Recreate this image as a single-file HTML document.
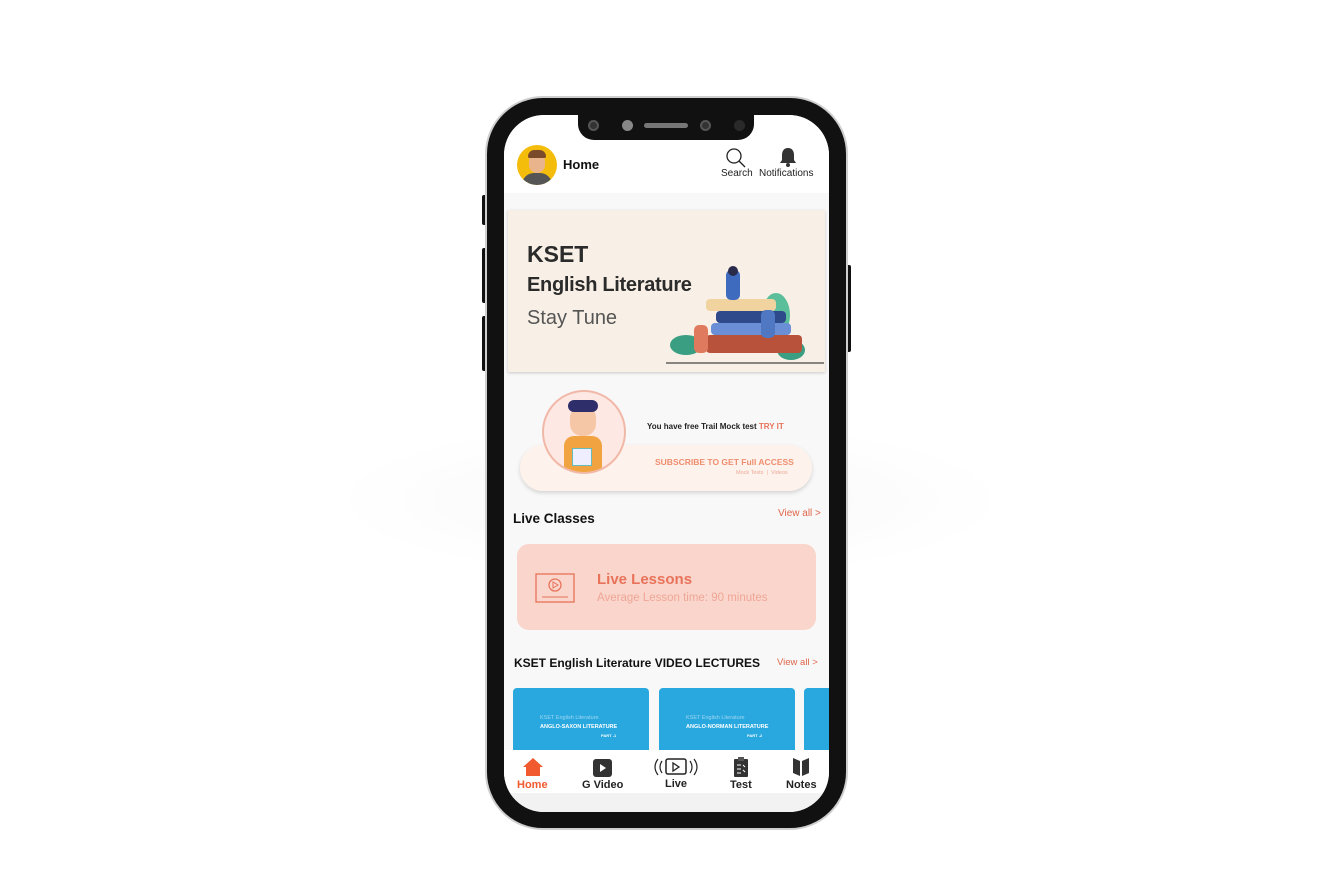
<!DOCTYPE html>
<html><head><style>
*{margin:0;padding:0;box-sizing:border-box}
body{width:1339px;height:893px;background:#fff;position:relative;overflow:hidden;font-family:"Liberation Sans",sans-serif}
.a{position:absolute}
.btn{background:#111;border-radius:2px}
</style></head><body>
<div class="a" style="left:330px;top:420px;width:680px;height:160px;border-radius:50%;background:radial-gradient(ellipse,#f7f7f7 0%,#fff 70%)"></div>
<div class="a btn" style="left:482px;top:195px;width:6px;height:30px"></div>
<div class="a btn" style="left:482px;top:248px;width:6px;height:55px"></div>
<div class="a btn" style="left:482px;top:316px;width:6px;height:55px"></div>
<div class="a btn" style="left:845px;top:265px;width:6px;height:87px"></div>
<div class="a" style="left:485px;top:96px;width:363px;height:734px;border-radius:58px;background:#111;border:2px solid #cfcfcf"></div>
<div class="a" style="left:504px;top:115px;width:325px;height:697px;border-radius:40px;background:#f8f8f8;overflow:hidden">
  <div class="a" style="left:0;top:0;width:325px;height:78px;background:#fff"></div>
  <div class="a" style="left:74px;top:0;width:176px;height:25px;background:#111;border-radius:0 0 16px 16px"></div>
  <div class="a" style="left:84px;top:5px;width:11px;height:11px;border-radius:50%;background:#333;border:2px solid #555"></div>
  <div class="a" style="left:118px;top:5px;width:11px;height:11px;border-radius:50%;background:#888"></div>
  <div class="a" style="left:140px;top:8px;width:44px;height:5px;border-radius:3px;background:#777"></div>
  <div class="a" style="left:196px;top:5px;width:11px;height:11px;border-radius:50%;background:#333;border:2px solid #555"></div>
  <div class="a" style="left:230px;top:5px;width:11px;height:11px;border-radius:50%;background:#2a2a2a"></div>
  <div class="a" style="left:13px;top:30px;width:40px;height:40px;border-radius:50%;background:#f5bd0b;overflow:hidden">
    <div class="a" style="left:12px;top:8px;width:16px;height:20px;border-radius:8px;background:#e9b48c"></div>
    <div class="a" style="left:11px;top:5px;width:18px;height:8px;border-radius:8px 8px 2px 2px;background:#7a4a2a"></div>
    <div class="a" style="left:5px;top:28px;width:30px;height:16px;border-radius:12px 12px 0 0;background:#555"></div>
  </div>
  <div class="a" style="left:59px;top:42px;font-size:13px;font-weight:bold;color:#111">Home</div>
  <svg class="a" style="left:221px;top:32px" width="22" height="22" viewBox="0 0 22 22"><circle cx="9" cy="9" r="7" fill="none" stroke="#222" stroke-width="1.3"/><path d="M14 14l6 6" stroke="#222" stroke-width="1.3"/></svg>
  <div class="a" style="left:217px;top:53px;font-size:10px;color:#222">Search</div>
  <svg class="a" style="left:275px;top:32px" width="18" height="20" viewBox="0 0 18 20"><path d="M9 1c-4 0-6 3-6 7v5l-2 3h16l-2-3V8c0-4-2-7-6-7z" fill="#333"/><circle cx="9" cy="18" r="2" fill="#333"/></svg>
  <div class="a" style="left:255px;top:53px;font-size:10px;color:#222">Notifications</div>
  <div class="a" style="left:4px;top:95px;width:317px;height:162px;background:#f8f0e6;box-shadow:0 1px 3px rgba(0,0,0,.2)">
    <div class="a" style="left:19px;top:31px;font-size:23px;font-weight:bold;color:#2b2b2b">KSET</div>
    <div class="a" style="left:19px;top:64px;font-size:20px;font-weight:bold;color:#2b2b2b;letter-spacing:-0.3px">English Literature</div>
    <div class="a" style="left:19px;top:97px;font-size:20px;color:#555">Stay Tune</div>
    <svg class="a" style="left:158px;top:55px" width="158" height="105" viewBox="0 0 158 105">
      <ellipse cx="20" cy="80" rx="16" ry="10" fill="#3a9e83"/><ellipse cx="110" cy="50" rx="14" ry="22" fill="#5bbf9c"/><ellipse cx="125" cy="85" rx="14" ry="10" fill="#3a9e83"/>
      <rect x="40" y="70" width="96" height="18" rx="4" fill="#b8523a"/><rect x="45" y="58" width="80" height="12" rx="4" fill="#6b8fd6"/><rect x="50" y="46" width="70" height="12" rx="4" fill="#2f4a8a"/><rect x="40" y="34" width="70" height="12" rx="4" fill="#f1d3a0"/>
      <rect x="60" y="5" width="14" height="30" rx="5" fill="#3f6bbf"/><circle cx="67" cy="6" r="5" fill="#2a2a4a"/>
      <rect x="28" y="60" width="14" height="28" rx="5" fill="#e07a5f"/><rect x="95" y="45" width="14" height="28" rx="5" fill="#4f77c2"/>
      <path d="M0 98h158" stroke="#444" stroke-width="1.2"/>
    </svg>
  </div>
  <div class="a" style="left:16px;top:330px;width:292px;height:46px;border-radius:23px;background:#fef3ec;box-shadow:0 2px 4px rgba(0,0,0,.15)"></div>
  <div class="a" style="left:38px;top:275px;width:84px;height:84px;border-radius:50%;background:#fde8e3;border:2px solid #f1b8a8;overflow:hidden">
    <div class="a" style="left:26px;top:14px;width:26px;height:30px;border-radius:12px;background:#f6c7a6"></div>
    <div class="a" style="left:24px;top:8px;width:30px;height:12px;border-radius:10px;background:#2e2e6a"></div>
    <div class="a" style="left:20px;top:44px;width:38px;height:40px;border-radius:10px;background:#f0a340"></div>
    <div class="a" style="left:28px;top:56px;width:20px;height:18px;background:#eef;border:1px solid #6bb"></div>
  </div>
  <div class="a" style="left:143px;top:307px;font-size:8px;font-weight:bold;color:#222">You have free Trail Mock test <span style="color:#e8735a">TRY IT</span></div>
  <div class="a" style="left:151px;top:342px;font-size:8.5px;font-weight:bold;color:#ef8d6f">SUBSCRIBE TO GET Full ACCESS</div>
  <div class="a" style="left:232px;top:355px;font-size:5.5px;color:#e8a898">Mock Tests &nbsp;|&nbsp; Videos</div>
  <div class="a" style="left:9px;top:396px;font-size:13.5px;font-weight:bold;color:#111">Live Classes</div>
  <div class="a" style="left:274px;top:393px;font-size:10px;color:#e0664a">View all &gt;</div>
  <div class="a" style="left:13px;top:429px;width:299px;height:86px;border-radius:12px;background:#f9d5cc"></div>
  <svg class="a" style="left:30px;top:458px" width="42" height="32" viewBox="0 0 42 32"><rect x="2" y="1" width="38" height="28" fill="none" stroke="#e8735a" stroke-width="1.3"/><circle cx="21" cy="12" r="6" fill="none" stroke="#e8735a" stroke-width="1.3"/><path d="M19 9v6l5-3z" fill="none" stroke="#e8735a"/><path d="M8 24h26" stroke="#e8735a"/></svg>
  <div class="a" style="left:93px;top:456px;font-size:15px;font-weight:bold;color:#e8735a">Live Lessons</div>
  <div class="a" style="left:93px;top:477px;font-size:11.5px;color:#f0a696">Average Lesson time: 90 minutes</div>
  <div class="a" style="left:10px;top:541px;font-size:12px;font-weight:bold;color:#111">KSET English Literature VIDEO LECTURES</div>
  <div class="a" style="left:273px;top:542px;font-size:9.5px;color:#e0664a">View all &gt;</div>
  <div class="a" style="left:9px;top:573px;width:136px;height:70px;border-radius:4px;background:#29a8df">
    <div class="a" style="left:27px;top:27px;font-size:5.5px;color:#9fd6f0">KSET English Literature</div>
    <div class="a" style="left:27px;top:36px;font-size:5.5px;font-weight:bold;color:#fff">ANGLO-SAXON LITERATURE</div>
    <div class="a" style="left:88px;top:45px;font-size:4px;font-weight:bold;color:#fff">PART -1</div>
  </div>
  <div class="a" style="left:155px;top:573px;width:136px;height:70px;border-radius:4px;background:#29a8df">
    <div class="a" style="left:27px;top:27px;font-size:5.5px;color:#9fd6f0">KSET English Literature</div>
    <div class="a" style="left:27px;top:36px;font-size:5.5px;font-weight:bold;color:#fff">ANGLO-NORMAN LITERATURE</div>
    <div class="a" style="left:88px;top:45px;font-size:4px;font-weight:bold;color:#fff">PART -2</div>
  </div>
  <div class="a" style="left:300px;top:573px;width:30px;height:70px;border-radius:4px;background:#29a8df"></div>
  <div class="a" style="left:0;top:635px;width:325px;height:43px;background:#fff"></div>
  <svg class="a" style="left:19px;top:643px" width="20" height="18" viewBox="0 0 20 18"><path d="M10 0L0 9h3v9h14V9h3z" fill="#f05a2e"/></svg>
  <div class="a" style="left:13px;top:664px;font-size:11px;font-weight:bold;color:#f05a2e">Home</div>
  <div class="a" style="left:89px;top:644px;width:19px;height:18px;border-radius:3px;background:#333"></div>
  <svg class="a" style="left:89px;top:644px" width="19" height="18"><path d="M7 5v8l6-4z" fill="#fff"/></svg>
  <div class="a" style="left:78px;top:664px;font-size:11px;font-weight:bold;color:#222">G Video</div>
  <svg class="a" style="left:150px;top:642px" width="44" height="20" viewBox="0 0 44 20"><rect x="12" y="2" width="20" height="15" rx="2" fill="none" stroke="#222" stroke-width="1.5"/><path d="M19 6v8l6-4z" fill="none" stroke="#222" stroke-width="1.3"/><path d="M8 4q-4 6 0 12M4 2q-6 8 0 16M36 4q4 6 0 12M40 2q6 8 0 16" fill="none" stroke="#222" stroke-width="1.2"/></svg>
  <div class="a" style="left:161px;top:663px;font-size:11px;font-weight:bold;color:#222">Live</div>
  <svg class="a" style="left:229px;top:642px" width="16" height="20" viewBox="0 0 16 20"><rect x="1" y="2" width="14" height="18" rx="1" fill="#333"/><rect x="5" y="0" width="6" height="4" fill="#555"/><path d="M4 8h4M4 12h4M4 16h4M10 8l2 2M10 13l2 2" stroke="#fff" stroke-width="1"/></svg>
  <div class="a" style="left:226px;top:664px;font-size:11px;font-weight:bold;color:#222">Test</div>
  <svg class="a" style="left:288px;top:642px" width="18" height="20" viewBox="0 0 18 20"><path d="M1 1l7 3v15l-7-3zM17 1l-7 3v15l7-3z" fill="#333"/></svg>
  <div class="a" style="left:282px;top:664px;font-size:11px;font-weight:bold;color:#222">Notes</div>
  <div class="a" style="left:0;top:678px;width:325px;height:20px;background:#f2f2f2"></div>
</div>
</body></html>
